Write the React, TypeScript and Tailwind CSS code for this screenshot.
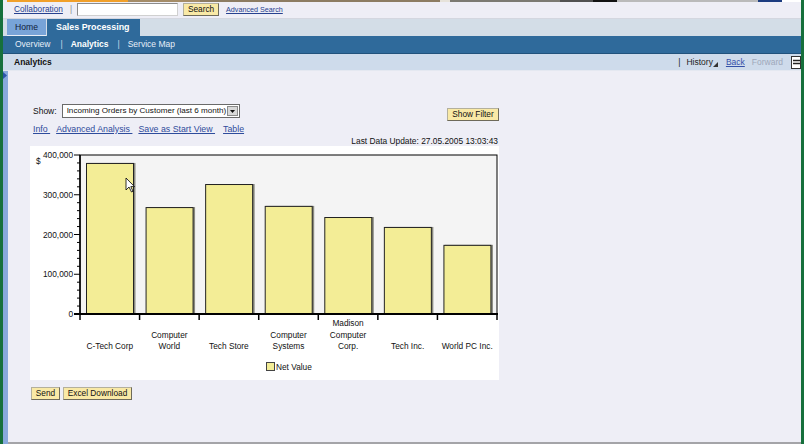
import type React from "react"

const bars = [
  { name: ["C-Tech Corp"], value: 380000 },
  { name: ["Computer", "World"], value: 269000 },
  { name: ["Tech Store"], value: 327000 },
  { name: ["Computer", "Systems"], value: 272000 },
  { name: ["Madison", "Computer", "Corp."], value: 244000 },
  { name: ["Tech Inc."], value: 219000 },
  { name: ["World PC Inc."], value: 174000 },
]

function Btn({ children, className = "" }: { children: React.ReactNode; className?: string }) {
  return (
    <button
      className={`h-[13px] bg-[#f9e9a6] border border-[#b4b09c] border-r-[#6e6a5a] border-b-[#6e6a5a] text-[8.3px] leading-[11px] text-[#111] text-center ${className}`}
    >
      {children}
    </button>
  )
}

function Chart() {
  const left = 50
  const right = 467
  const top = 9
  const bottom = 168
  const max = 400000
  const cw = (right - left) / bars.length
  const y = (v: number) => bottom - (v / max) * (bottom - top)
  const minor = Array.from({ length: 21 }, (_, i) => i)

  return (
    <svg width="469" height="234" className="block" fontFamily="'Liberation Sans', Arial, sans-serif">
      <rect x="0" y="0" width="469" height="234" fill="#ffffff" />
      <rect x={left} y={top} width={right - left} height={bottom - top} fill="#f4f4f4" stroke="#000" strokeWidth="1" />
      {minor.map((i) => {
        const ty = bottom - (i * (bottom - top)) / 20
        const major = i % 5 === 0
        return <line key={i} x1={major ? 44 : 47} x2={left} y1={ty} y2={ty} stroke="#000" strokeWidth="1" />
      })}
      {[0, 100000, 200000, 300000, 400000].map((v) => (
        <text key={v} x="43" y={y(v) + 3} fontSize="8.3" textAnchor="end" fill="#111">
          {v.toLocaleString("en-US")}
        </text>
      ))}
      <text x="6" y="18" fontSize="8.3" fill="#111">$</text>

      {bars.map((b, i) => {
        const bx = left + i * cw + 6
        const by = y(b.value)
        return (
          <g key={i}>
            <rect x={bx + 1.5} y={by} width="48" height={bottom - by} fill="#8a8a80" />
            <rect x={bx + 0.5} y={by + 0.5} width="47" height={bottom - by} fill="#f3ed96" stroke="#222" strokeWidth="1" />
          </g>
        )
      })}

      <line x1={left} x2={left} y1={top} y2={bottom + 1} stroke="#000" strokeWidth="1.5" />
      <line x1="44" x2={right + 1} y1={bottom} y2={bottom} stroke="#000" strokeWidth="2" />
      {Array.from({ length: bars.length + 1 }, (_, i) => (
        <line key={i} x1={left + i * cw} x2={left + i * cw} y1={bottom} y2={bottom + 6} stroke="#000" strokeWidth="1.5" />
      ))}

      {bars.map((b, i) => {
        const cx = left + (i + 0.5) * cw
        const n = b.name.length
        return b.name.map((line, j) => (
          <text key={`${i}-${j}`} x={cx} y={203 - (n - 1 - j) * 11.5} fontSize="8.3" textAnchor="middle" fill="#111">
            {line}
          </text>
        ))
      })}

      <rect x="236.5" y="216.5" width="8" height="8" fill="#f3ed96" stroke="#444" strokeWidth="1" />
      <text x="246" y="223.5" fontSize="8.3" fill="#111">Net Value</text>

      <path
        d="M96 32 L96 44 L99 41 L101.5 46 L103 45.3 L100.8 40.6 L104.5 40.6 Z"
        fill="#fff"
        stroke="#000"
        strokeWidth="0.8"
      />
    </svg>
  )
}

export default function App() {
  return (
    <div className="w-[804px] h-[444px] flex overflow-hidden bg-[#eeeef6] font-['Liberation_Sans',Arial,sans-serif] text-[#111]">
      <div className="w-[3px] bg-[#16703c]" />

      <div className="flex-1 flex flex-col min-w-0">
        {/* banner strip */}
        <svg width="798" height="2" className="block shrink-0">
          <rect x="0" y="0" width="798" height="2" fill="#eeeef6" />
          <rect x="4" y="0" width="121" height="2" fill="#f1a02a" />
          <rect x="125" y="0" width="72" height="2" fill="#a48c68" />
          <rect x="197" y="0" width="240" height="2" fill="#8c7c62" />
          <rect x="437" y="0" width="10" height="2" fill="#e6e2da" />
          <rect x="447" y="0" width="110" height="2" fill="#7c7a72" />
          <rect x="557" y="0" width="33" height="2" fill="#505050" />
          <rect x="590" y="0" width="24" height="2" fill="#121212" />
          <rect x="614" y="0" width="141" height="2" fill="#bababa" />
          <rect x="755" y="0" width="24" height="2" fill="#1c3c80" />
          <rect x="779" y="0" width="19" height="2" fill="#ffffff" />
        </svg>

        {/* top toolbar */}
        <div className="h-[17px] shrink-0 flex items-start pt-[1px] pl-[11px] border-b border-[#d4d7e0]">
          <a className="text-[8.3px] leading-[13px] text-[#27418f] underline">Collaboration</a>
          <span className="ml-[7px] text-[8.3px] leading-[13px] text-[#8a8a8a]">|</span>
          <input className="ml-[5px] w-[101px] h-[13px] bg-white border border-[#8c8c8c] border-b-[#d0d0d0] border-r-[#d0d0d0]" />
          <Btn className="ml-[5px] w-[36px]">Search</Btn>
          <a className="ml-[7px] text-[7.2px] leading-[14px] text-[#27418f] underline">Advanced Search</a>
        </div>

        {/* tabs */}
        <div className="h-[17px] shrink-0 flex bg-[#d3dde7] pl-[4px]">
          <div className="w-[39px] bg-[#78a4d8] border-b border-[#e8eef6] text-[8.6px] leading-[16px] pl-[8px] text-[#10203a]">
            Home
          </div>
          <div className="ml-[1px] w-[93px] bg-[#2f6a9b] text-white font-bold text-[8.9px] leading-[17px] pl-[9px]">
            Sales Processing
          </div>
        </div>

        {/* sub navigation */}
        <div className="h-[18px] shrink-0 flex items-center bg-[#2f6a9b] border-b border-[#21527c] pl-[12px] text-[8.5px] text-white">
          <span className="text-[#e6eef8]">Overview</span>
          <span className="ml-[10px] text-[#c8d8ea]">|</span>
          <span className="ml-[8px] font-bold">Analytics</span>
          <span className="ml-[9px] text-[#c8d8ea]">|</span>
          <span className="ml-[8px] text-[#e6eef8]">Service Map</span>
        </div>

        {/* page title */}
        <div className="h-[17px] shrink-0 flex items-center bg-[#cedbeb] border-b border-[#e4e8f1] pl-[11px] text-[8.5px]">
          <span className="font-bold text-[#111]">Analytics</span>
          <div className="ml-auto flex items-center">
            <span className="text-[#222]">|</span>
            <span className="ml-[6px] text-[#222]">History</span>
            <svg width="5" height="5" className="mt-[5px]">
              <path d="M5 0 L5 5 L0 5 Z" fill="#333" />
            </svg>
            <a className="ml-[8px] text-[#3450a8] underline">Back</a>
            <span className="ml-[7px] text-[#9ea8ba]">Forward</span>
            <svg width="10" height="13" className="ml-[8px]">
              <rect x="0.5" y="0.5" width="9" height="12" fill="#fff" stroke="#333" />
              <line x1="2" x2="9" y1="4.5" y2="4.5" stroke="#222" strokeWidth="1.5" />
              <line x1="2" x2="9" y1="7.5" y2="7.5" stroke="#222" strokeWidth="1.5" />
            </svg>
          </div>
        </div>

        {/* body */}
        <div className="flex-1 flex min-h-0">
          <div className="w-[5px] bg-[#88a9dc] pt-[1px]">
            <svg width="5" height="7">
              <path d="M0 0 L4 3.5 L0 7 Z" fill="#2c55a8" />
            </svg>
          </div>
          <div className="flex-1 border-b-2 border-[#a4a4a8] pl-[22px] pt-[33px]">
            <div className="w-[469px]">
              <div className="h-[17px] flex items-start">
                <span className="text-[8.5px] leading-[14px] ml-[3px]">Show:</span>
                <div className="ml-[5px] w-[178px] h-[14px] flex items-center bg-white border border-[#6a6a6a]">
                  <span className="flex-1 pl-[4px] text-[8.1px] leading-[12px] whitespace-nowrap overflow-hidden">
                    Incoming Orders by Customer (last 6 month)
                  </span>
                  <div className="w-[11px] h-[10px] mr-[1px] bg-[#d8d8d8] border border-[#8a8a8a] flex items-center justify-center">
                    <svg width="5" height="3">
                      <path d="M0 0 L5 0 L2.5 3 Z" fill="#111" />
                    </svg>
                  </div>
                </div>
                <Btn className="ml-auto mt-[4px] w-[52px]">Show Filter</Btn>
              </div>

              <div className="mt-[3px] h-[10px] flex text-[8.8px] leading-[10px] text-[#2e4c9c] pl-[3px]">
                <a className="underline whitespace-pre">Info </a>
                <a className="ml-[6px] underline whitespace-pre">Advanced Analysis </a>
                <a className="ml-[6px] underline whitespace-pre">Save as Start View </a>
                <a className="ml-[8px] underline">Table</a>
              </div>

              <div className="mt-[2px] h-[10px] text-right text-[8.4px] leading-[10px] pr-[1px]">
                Last Data Update: 27.05.2005 13:03:43
              </div>

              <Chart />

              <div className="mt-[7px] flex">
                <Btn className="ml-[1px] w-[29px]">Send</Btn>
                <Btn className="ml-[3px] w-[69px]">Excel Download</Btn>
              </div>
            </div>
          </div>
        </div>
      </div>

      <div className="w-[3px] bg-[#16703c]" />
    </div>
  )
}
